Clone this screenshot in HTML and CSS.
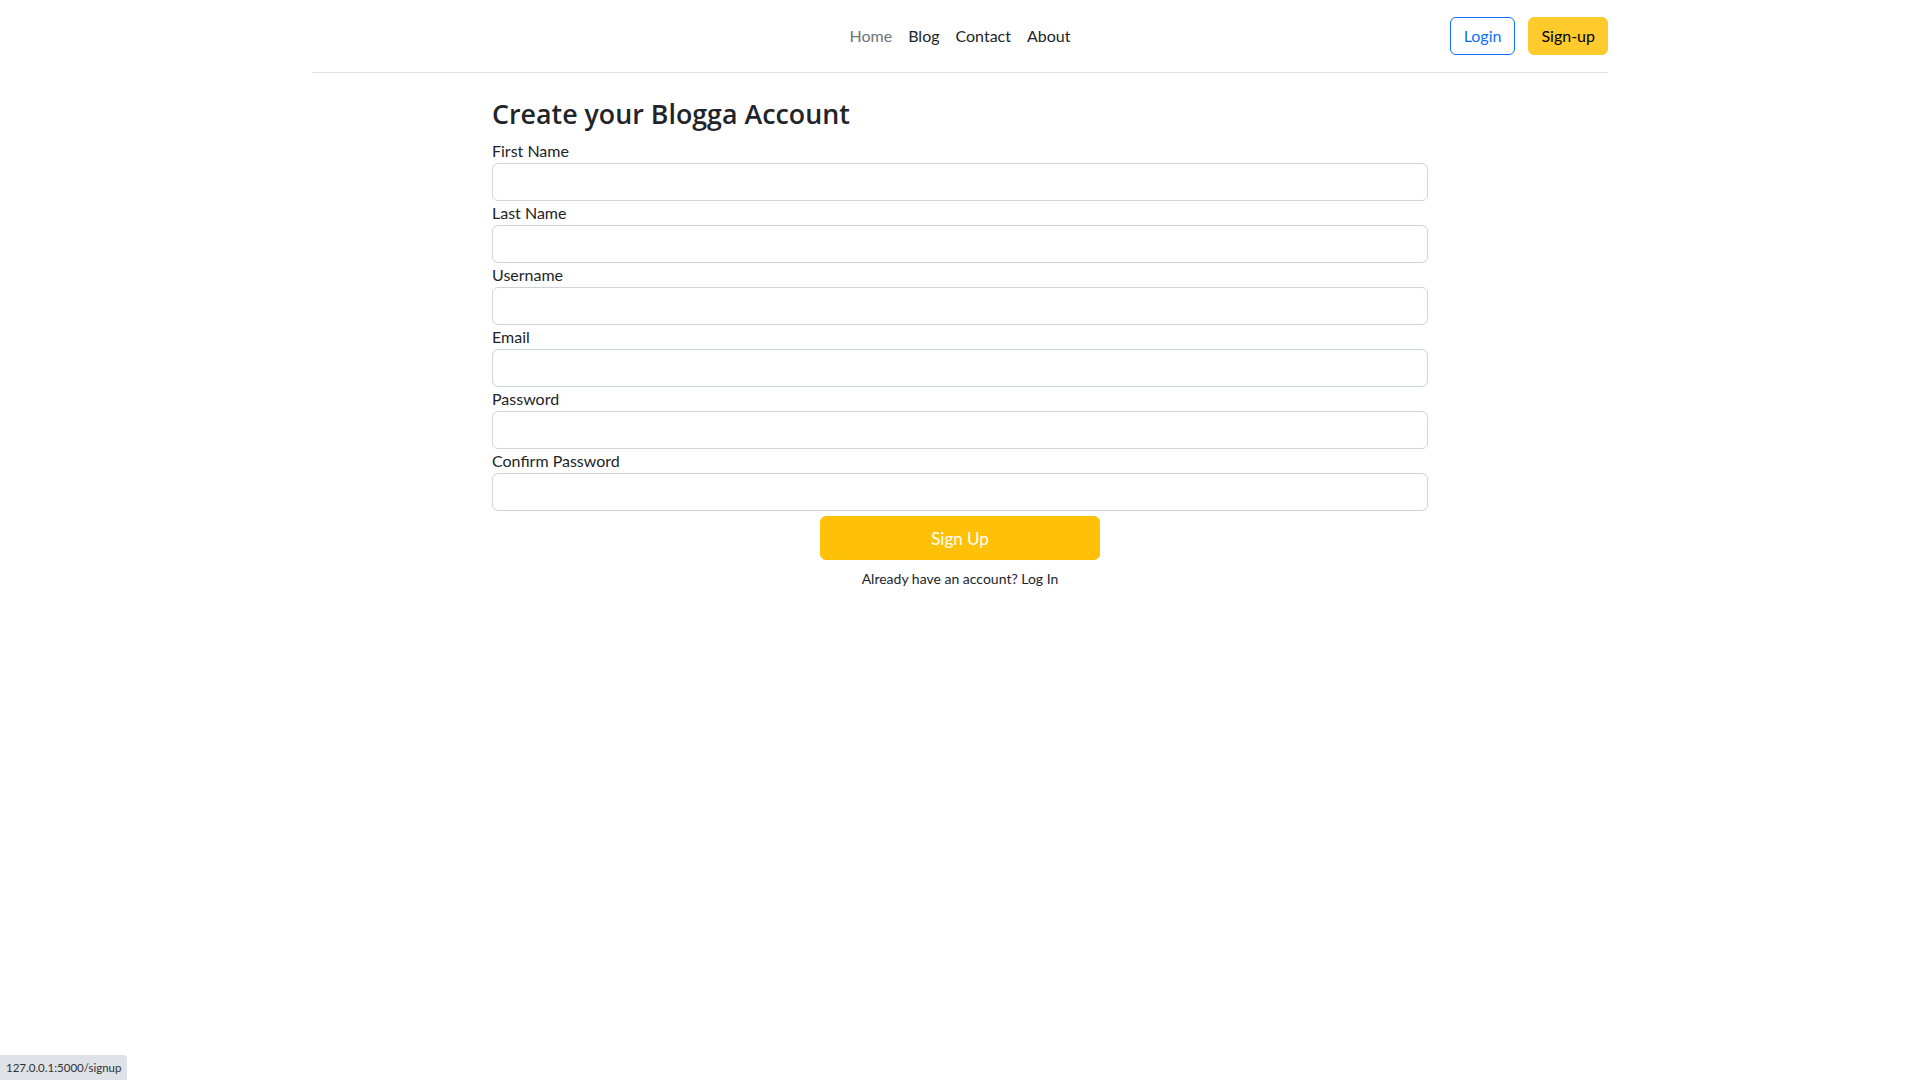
FILE: index.html
```
<!DOCTYPE html>
<html lang="en">
<head>
<meta charset="utf-8">
<title>Sign Up - Blogga</title>
<link rel="stylesheet" href="styles.css">
</head>
<body>
<div class="container">
  <header class="site-header">
    <div class="spacer"></div>
    <ul class="nav">
      <li><a href="#" class="nav-link muted">Home</a></li>
      <li><a href="#" class="nav-link">Blog</a></li>
      <li><a href="#" class="nav-link">Contact</a></li>
      <li><a href="#" class="nav-link">About</a></li>
    </ul>
    <div class="actions">
      <button type="button" class="btn btn-outline">Login</button>
      <button type="button" class="btn btn-warning">Sign-up</button>
    </div>
  </header>
</div>

<main class="form-wrap">
  <h3 class="title">Create your Blogga Account</h3>
  <form class="signup-form">
    <div class="field"><label for="fn">First Name</label><input id="fn" type="text" class="form-control"></div>
    <div class="field"><label for="ln">Last Name</label><input id="ln" type="text" class="form-control"></div>
    <div class="field"><label for="un">Username</label><input id="un" type="text" class="form-control"></div>
    <div class="field"><label for="em">Email</label><input id="em" type="email" class="form-control"></div>
    <div class="field"><label for="pw">Password</label><input id="pw" type="password" class="form-control"></div>
    <div class="field"><label for="cpw">Confirm Password</label><input id="cpw" type="password" class="form-control"></div>
    <div class="submit-row">
      <button type="submit" class="btn-submit">Sign Up</button>
    </div>
    <p class="already">Already have an account? <a href="#" class="login-link">Log In</a></p>
  </form>
</main>

<div class="status-bar">127.0.0.1:5000/signup</div>
</body>
</html>
```
FILE: styles.css
```
* { box-sizing: border-box; }
html, body { margin: 0; padding: 0; }
body {
  font-family: Lato, "Open Sans", sans-serif;
  font-size: 16px;
  line-height: 1.5;
  color: #212529;
  background: #fff;
  height: 1080px;
  overflow: hidden;
}
.container {
  width: 1296px;
  margin: 0 auto;
}
.site-header {
  display: grid;
  grid-template-columns: 1fr auto 1fr;
  align-items: center;
  padding: 16px 0;
  margin-bottom: 24px;
  border-bottom: 1px solid #dee2e6;
}
.nav {
  list-style: none;
  margin: 0;
  padding: 0;
  display: flex;
}
.nav-link {
  display: block;
  padding: 8px 8px;
  color: #212529;
  text-decoration: none;
}
.nav-link.muted { color: #6c757d; }
.actions {
  display: flex;
  justify-content: flex-end;
  gap: 13px;
}
.btn {
  font-family: inherit;
  font-size: 16px;
  line-height: 24px;
  padding: 6px 12px;
  border-radius: 6px;
  border: 1px solid transparent;
  cursor: pointer;
}
.btn-outline {
  background: #fff;
  color: #0d6efd;
  border-color: #0d6efd;
  padding: 6px 13px;
}
.btn-warning {
  background: #ffca2c;
  border-color: #ffca2c;
  color: #000;
}
.form-wrap {
  width: 936px;
  margin: 0 auto;
}
.title {
  font-family: "Open Sans", Lato, sans-serif;
  font-size: 26.8px;
  font-weight: 600;
  line-height: 34px;
  margin: 0 0 8px;
}
.signup-form { margin: 0; }
.field label { display: block; }
.form-control {
  display: block;
  width: 100%;
  height: 38px;
  padding: 6px 12px;
  font-family: inherit;
  font-size: 16px;
  border: 1px solid #ced4da;
  border-radius: 6px;
  background: #fff;
}
.submit-row {
  display: flex;
  justify-content: center;
  margin-top: 5px;
}
.btn-submit {
  width: 280px;
  height: 44px;
  background: #ffc107;
  border: 1px solid #ffc107;
  border-radius: 6px;
  color: #fff;
  font-family: inherit;
  font-size: 17px;
  cursor: pointer;
}
.already {
  text-align: center;
  font-size: 14px;
  margin: 8px 0 0;
}
.login-link { color: #212529; text-decoration: none; }
.status-bar {
  position: fixed;
  left: 0;
  bottom: 0;
  height: 25px;
  padding: 4px 6px 0;
  font-size: 11.5px;
  line-height: 17px;
  color: #333;
  background: #dee1e6;
  border-top-right-radius: 3px;
}
```
